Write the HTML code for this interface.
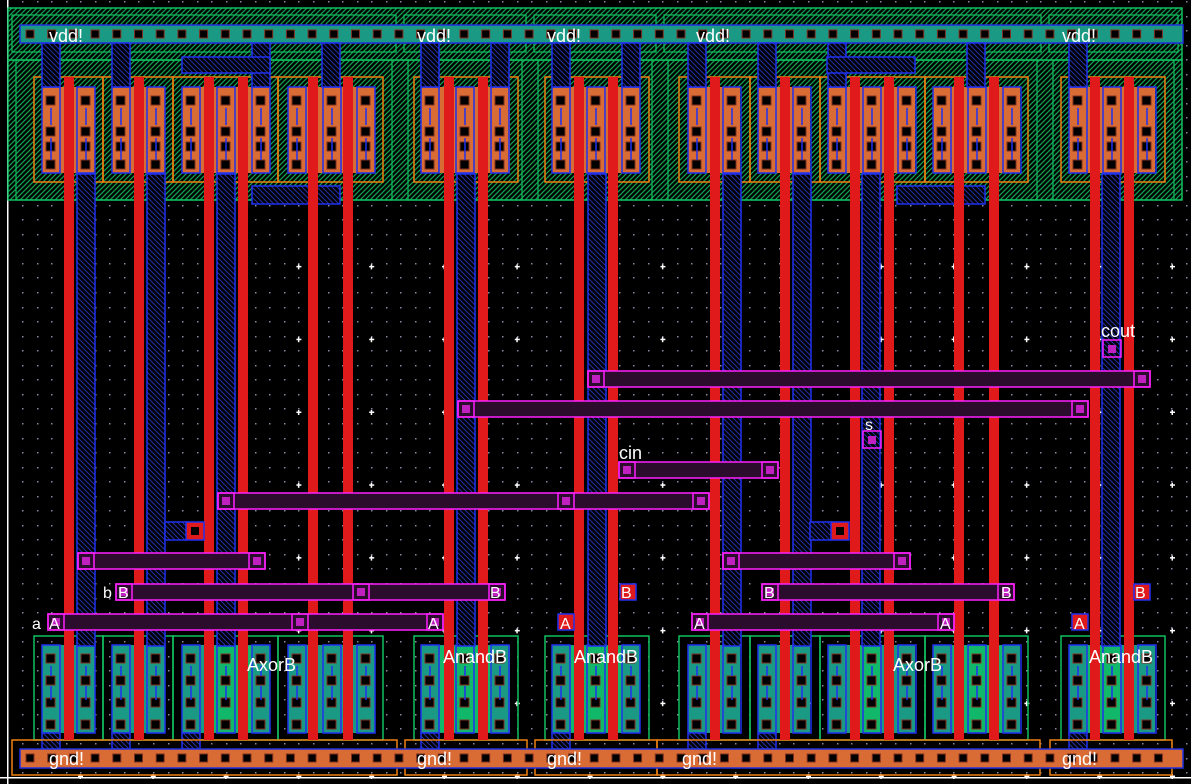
<!DOCTYPE html>
<html><head><meta charset="utf-8"><style>
html,body{margin:0;padding:0;background:#000;width:1191px;height:784px;overflow:hidden}
svg{display:block}
text{font-family:"Liberation Sans",sans-serif;fill:#fff;font-size:18px}
</style></head><body>
<svg id="s" width="1191" height="784" xmlns="http://www.w3.org/2000/svg">
<defs>
<pattern id="hg" width="5" height="5" patternUnits="userSpaceOnUse"><rect width="5" height="5" fill="#000"/><path d="M0 5L5 0M-1 1L1 -1M4 6L6 4" stroke="#10a050" stroke-width="1.3"/></pattern>
<pattern id="hb" width="5" height="5" patternUnits="userSpaceOnUse"><rect width="5" height="5" fill="#000"/><path d="M0 0L5 5M-1 4L1 6M4 -1L6 1" stroke="#2430a8" stroke-width="1"/></pattern>
</defs>
<rect width="1191" height="784" fill="#000"/>
<g id="g"></g>
</svg>
<script>
const OB='#d86c34',GB='#1a9a84',GG='#12b86a',RD='#e01a1a',MG='#2c0c2c';
const g=document.getElementById('g');
function R(x,y,w,h,f,s,sw){const r=document.createElementNS('http://www.w3.org/2000/svg','rect');r.setAttribute('x',x);r.setAttribute('y',y);r.setAttribute('width',w);r.setAttribute('height',h);r.setAttribute('fill',f||'none');if(s){r.setAttribute('stroke',s);r.setAttribute('stroke-width',sw||1.5);}g.appendChild(r);return r;}
function T(x,y,t,sz){const e=document.createElementNS('http://www.w3.org/2000/svg','text');e.setAttribute('x',x);e.setAttribute('y',y);e.textContent=t;if(sz)e.setAttribute('style','font-size:'+sz+'px');g.appendChild(e);}
for(let x=22;x<1191;x+=14.55)for(let y=1;y<784;y+=14.55)R(Math.round(x),Math.round(y),1.5,1.5,'#8888a0');
R(7,0,1.5,784,'#fff');R(0,777,1191,1.5,'#fff');
for(let x=80;x<1191;x+=72.8)for(let y=48;y<784;y+=72.8){R(x-2,y-0.5,5,1.5,'#fff');R(x-0.5,y-2,1.5,5,'#fff');}
R(8,8,1174,192,'url(#hg)','#10c060',1.5);
R(8,60,1174,0.1,'none','#10c060',1.5);
[[8,400],[400,530],[530,660],[660,1045],[1045,1182]].forEach(c=>{R(c[0]+4,15,c[1]-c[0]-8,37,'none','#10c060',1.2);R(c[0]+8,60,c[1]-c[0]-16,140,'none','#10c060',1.2);});
R(20,25,1163,18,GB,'#2030e0',1.5);
for(let x=26;x<1175;x+=21.7)R(x,30,8,8,'#000','#803020',1);
const boxes=[[34,103],[103,173],[173,278],[278,383],[414,518],[545,649],[679,750],[750,820],[820,925],[925,1028],[1061,1165]];
boxes.forEach(b=>R(b[0],77,b[1]-b[0],105,'none','#f08010',1.5));
boxes.forEach(b=>R(b[0],636,b[1]-b[0],104,'none','#10c060',1.5));
const dif=[[42,95],[112,165],[182,270],[288,375],[421,510],[552,640],[688,740],[758,810],[828,915],[933,1020],[1069,1155]];
dif.forEach(d=>{R(d[0],87,d[1]-d[0],86,OB);R(d[0],645,d[1]-d[0],88,GB);});
[[440,492],[571,622],[213,252],[860,880],[953,1003],[1087,1120]].forEach(d=>R(d[0],646,d[1]-d[0],86,GG));
const cc=[51,86,121,156,191,226,261,297,332,366,430,465,500,561,596,631,697,732,767,802,837,872,907,942,977,1012,1078,1112,1147];
cc.forEach(x=>{R(x-9,87,18,86,'none','#2030f0',1.5);R(x-9,645,18,88,'none','#2030f0',1.5);
 [96,127,142,160].forEach(y=>R(x-5,y,9,9,'#000','#803020',1));
 [654,676,698,720].forEach(y=>R(x-5,y,9,9,'#000','#803020',1));
 const l=document.createElementNS('http://www.w3.org/2000/svg','path');l.setAttribute('d',`M${x} 108V125M${x} 138V160M${x} 666V676M${x} 686V700`);l.setAttribute('stroke','#2030f0');l.setAttribute('stroke-width','1.5');g.appendChild(l);
});
[77,147,217,457,588,723,793,862,1102].forEach(x=>R(x,174,18,472,'url(#hb)','#2030f0',1.5));
[42,112,252,322,421,491,552,622,688,758,828,967,1069].forEach(x=>R(x,43,18,44,'url(#hb)','#2030f0',1.5));
R(182,57,88,16,'url(#hb)','#2030f0',1.5);R(827,57,88,16,'url(#hb)','#2030f0',1.5);
R(252,186,88,18,'url(#hb)','#2030f0',1.5);R(897,186,88,18,'url(#hb)','#2030f0',1.5);
[42,112,182,421,552,688,758,1069].forEach(x=>R(x,733,18,16,'url(#hb)','#2030f0',1.5));
[[12,397],[405,527],[535,657],[657,1040],[1050,1172]].forEach(c=>R(c[0],740,c[1]-c[0],35,'none','#f08010',1.5));
R(20,749,1163,19,OB,'#2030e0',1.5);
for(let x=26;x<1175;x+=21.7)R(x,754,8,8,'#000','#803020',1);
[69,139,209,243,313,348,449,483,579,613,715,785,855,889,959,994,1095,1129].forEach(x=>R(x-5,77,10,663,RD));
[[165,522],[810,522]].forEach(p=>{R(p[0],p[1],22,18,'url(#hb)','#2030f0',1.5);R(p[0]+21,p[1],18,18,RD,'#2030f0',1.5);R(p[0]+26,p[1]+5,8,8,'#000');});
function M(x1,x2,y){R(x1,y,x2-x1,16,MG,'#ff20ff',1.5);R(x1,y,16,16,'none','#ff20ff',1.5);R(x1+4,y+4,8,8,'#c020c0');R(x2-16,y,16,16,'none','#ff20ff',1.5);R(x2-12,y+4,8,8,'#c020c0');}
M(588,1150,371);M(458,1088,401);M(619,778,462);M(218,709,493);
M(78,265,553);M(723,910,553);M(116,505,584);M(762,1014,584);M(48,443,614);M(692,954,614);
R(558,493,16,16,'none','#ff20ff',1.5);R(562,497,8,8,'#c020c0');
R(292,614,16,16,'none','#ff20ff',1.5);R(296,618,8,8,'#c020c0');
R(353,584,16,16,'none','#ff20ff',1.5);R(357,588,8,8,'#c020c0');
R(1103,340,18,17,'none','#ff20ff',1.5);R(1108,345,8,8,'#c020c0');
R(863,431,18,17,'none','#ff20ff',1.5);R(868,436,8,8,'#c020c0');
[[620,584],[1134,584]].forEach(p=>R(p[0],p[1],16,16,RD,'#2030f0',1.5));
[[558,614],[1072,614]].forEach(p=>R(p[0],p[1],16,16,RD,'#2030f0',1.5));
[[49,42],[417,42],[547,42],[696,42],[1062,42]].forEach(p=>T(p[0],p[1],'vdd!'));
[[49,765],[417,765],[547,765],[682,765],[1062,765]].forEach(p=>T(p[0],p[1],'gnd!'));
T(247,671,'AxorB');T(893,671,'AxorB');
T(443,663,'AnandB');T(574,663,'AnandB');T(1089,663,'AnandB');
T(1101,337,'cout');T(619,459,'cin');T(865,430,'s',16);T(103,598,'b',16);T(32,629,'a',16);
[[118,598],[490,598],[621,598],[764,598],[1001,598],[1135,598]].forEach(p=>T(p[0],p[1],'B',16));
[[49,629],[428,629],[560,629],[694,629],[940,629],[1074,629]].forEach(p=>T(p[0],p[1],'A',16));
</script>
</body></html>
